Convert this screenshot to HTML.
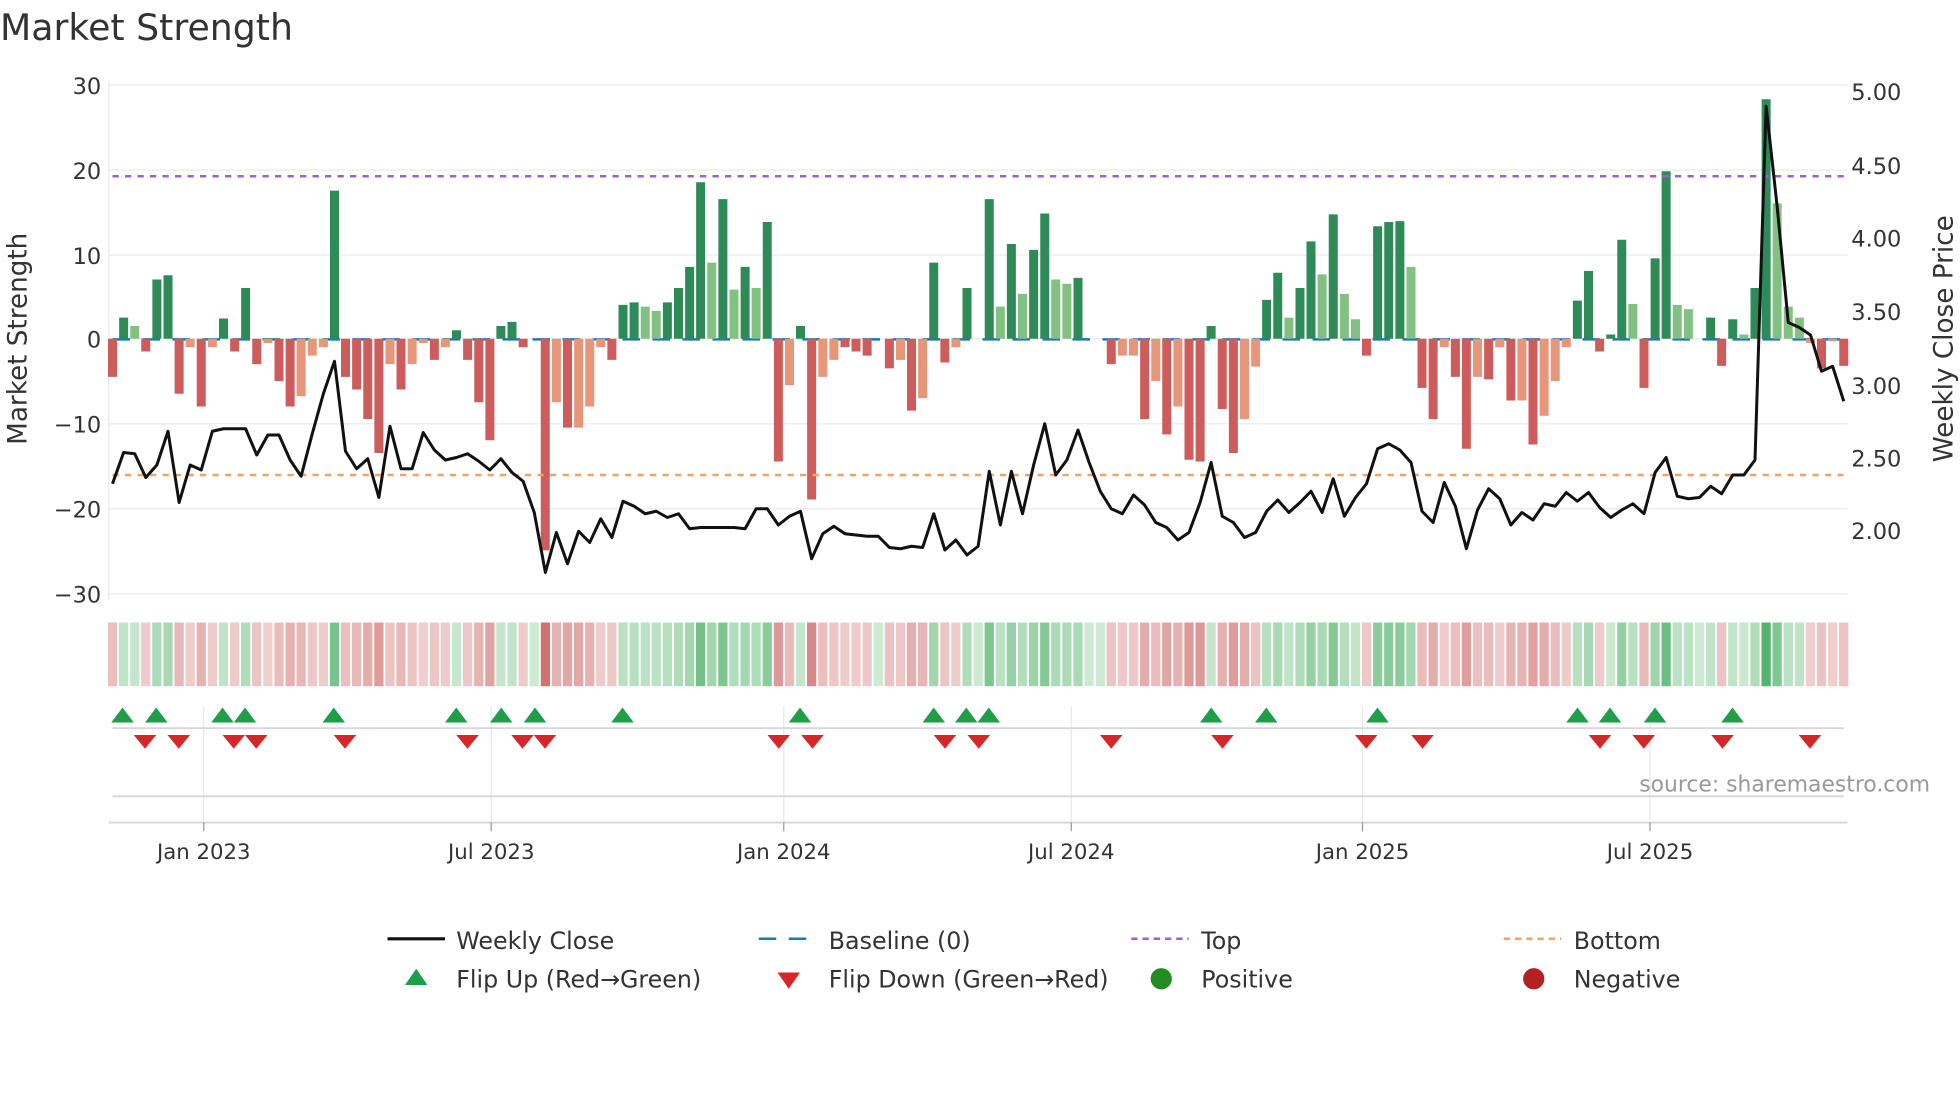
<!DOCTYPE html>
<html><head><meta charset="utf-8">
<style>
html,body{margin:0;padding:0;background:#fff;}
svg{display:block;font-family:"DejaVu Sans","Liberation Sans",sans-serif;}
</style></head>
<body>
<svg id="s" width="1960" height="1102" viewBox="0 0 1568 881.6" xmlns="http://www.w3.org/2000/svg">
<rect width="1568" height="882" fill="#fff"/>
<text x="0" y="32" font-size="29" fill="#333">Market Strength</text>
<g id="grid" stroke="#eceef3" stroke-width="1.2">
<line x1="87" y1="68" x2="1478" y2="68"/><line x1="87" y1="136" x2="1478" y2="136"/>
<line x1="87" y1="204" x2="1478" y2="204"/><line x1="87" y1="271" x2="1478" y2="271"/>
<line x1="87" y1="339" x2="1478" y2="339"/><line x1="87" y1="407" x2="1478" y2="407"/>
<line x1="87" y1="475" x2="1478" y2="475"/><line x1="87" y1="65" x2="87" y2="480"/>
</g>
<g font-size="18" fill="#333" text-anchor="end">
<text x="81" y="75">30</text><text x="81" y="143">20</text><text x="81" y="211">10</text>
<text x="81" y="278">0</text><text x="81" y="346">−10</text><text x="81" y="414">−20</text><text x="81" y="482">−30</text>
</g>
<g font-size="18" fill="#333">
<text x="1481" y="80">5.00</text><text x="1481" y="139">4.50</text><text x="1481" y="197">4.00</text>
<text x="1481" y="256">3.50</text><text x="1481" y="315">3.00</text><text x="1481" y="373">2.50</text><text x="1481" y="431">2.00</text>
</g>
<text transform="translate(21,271) rotate(-90)" font-size="21" fill="#333" text-anchor="middle">Market Strength</text>
<text transform="translate(1562,271) rotate(-90)" font-size="21" fill="#333" text-anchor="middle">Weekly Close Price</text>
<line x1="90" y1="271.5" x2="1477" y2="271.5" stroke="#1f77b4" stroke-width="2" stroke-dasharray="14,10"/>
<g id="bars"></g>
<line x1="90" y1="141" x2="1477" y2="141" stroke="#9b5fd8" stroke-width="2" stroke-dasharray="5,5"/>
<line x1="90" y1="380" x2="1477" y2="380" stroke="#f0a364" stroke-width="2" stroke-dasharray="5,5"/>
<polyline id="price" fill="none" stroke="#111" stroke-width="2.4" stroke-linejoin="round"/>
<g id="heat"></g>
<g stroke="#e6e8ee" stroke-width="1">
<line x1="163" y1="565" x2="163" y2="658"/><line x1="393" y1="565" x2="393" y2="658"/>
<line x1="627" y1="565" x2="627" y2="658"/><line x1="857" y1="565" x2="857" y2="658"/>
<line x1="1090" y1="565" x2="1090" y2="658"/><line x1="1320" y1="565" x2="1320" y2="658"/>
</g>
<line x1="90" y1="582.5" x2="1475" y2="582.5" stroke="#d5d7dc" stroke-width="1.5"/>
<line x1="90" y1="637" x2="1475" y2="637" stroke="#d5d7dc" stroke-width="1.5"/>
<line x1="87" y1="658" x2="1478" y2="658" stroke="#d5d7dc" stroke-width="1.5"/>
<g stroke="#999" stroke-width="1">
<line x1="163" y1="658" x2="163" y2="665"/><line x1="393" y1="658" x2="393" y2="665"/>
<line x1="627" y1="658" x2="627" y2="665"/><line x1="857" y1="658" x2="857" y2="665"/>
<line x1="1090" y1="658" x2="1090" y2="665"/><line x1="1320" y1="658" x2="1320" y2="665"/>
</g>
<g id="tri"></g>
<g font-size="17" fill="#333" text-anchor="middle">
<text x="163" y="687">Jan 2023</text><text x="393" y="687">Jul 2023</text><text x="627" y="687">Jan 2024</text>
<text x="857" y="687">Jul 2024</text><text x="1090" y="687">Jan 2025</text><text x="1320" y="687">Jul 2025</text>
</g>
<text x="1544" y="633" font-size="17.5" fill="#999" text-anchor="end">source: sharemaestro.com</text>
<g font-size="19" fill="#333">
<line x1="310" y1="751" x2="356" y2="751" stroke="#111" stroke-width="2.5"/>
<text x="365" y="759">Weekly Close</text>
<line x1="607" y1="751" x2="653" y2="751" stroke="#1f77b4" stroke-width="2" stroke-dasharray="14,10"/>
<text x="663" y="759">Baseline (0)</text>
<line x1="905" y1="751" x2="951" y2="751" stroke="#9b5fd8" stroke-width="2" stroke-dasharray="5,4"/>
<text x="961" y="759">Top</text>
<line x1="1203" y1="751" x2="1249" y2="751" stroke="#f0a364" stroke-width="2" stroke-dasharray="5,4"/>
<text x="1259" y="759">Bottom</text>
<polygon points="324,788 342,788 333,775" fill="#1f9e4a"/>
<text x="365" y="790">Flip Up (Red→Green)</text>
<polygon points="622,778 640,778 631,791" fill="#d62728"/>
<text x="663" y="790">Flip Down (Green→Red)</text>
<circle cx="929" cy="783" r="8.5" fill="#228b22"/>
<text x="961" y="790">Positive</text>
<circle cx="1227" cy="783" r="8.5" fill="#b22222"/>
<text x="1259" y="790">Negative</text>
</g>
</svg>
<script>
var B="-4.5R 2.5G 1.5g -1.5R 7G 7.5G -6.5R -1r -8R -1r 2.4G -1.5R 6G -3R -0.5r -5R -8R -6.8r -2r -1r 17.5G -4.5R -6R -9.5R -13.5R -3r -6R -3r -0.5r -2.5R -1r 1G -2.5R -7.5R -12R 1.5G 2G -1R 0g -25R -7.5r -10.5R -10.5r -8r -1r -2.5R 4G 4.3G 3.8g 3.3g 4.3G 6G 8.5G 18.5G 9g 16.5G 5.8g 8.5G 6g 13.8G -14.5R -5.5r 1.5G -19R -4.5r -2.5r -1R -1.5R -2R 0g -3.5R -2.5r -8.5R -7r 9G -2.8R -1r 6G 0g 16.5G 3.8g 11.2G 5.3g 10.5G 14.8G 7g 6.5g 7.2G 0g 0g -3R -2r -2r -9.5R -5r -11.3R -8r -14.3R -14.5R 1.5G -8.3R -13.5R -9.5r -3.3r 4.6G 7.8G 2.5g 6G 11.5G 7.6g 14.7G 5.3g 2.3g -2R 13.3G 13.8G 13.9G 8.5g -5.8R -9.5R -1r -4.5R -13R -4.5r -4.8R -1r -7.3R -7.3r -12.5R -9.1r -5r -1r 4.5G 8G -1.5R 0.5G 11.7G 4.1g -5.8R 9.5G 19.8G 4g 3.5g 0g 2.5G -3.2R 2.3G 0.5g 6G 28.3G 16g 3.8g 2.5g -0.5r -3.5R -0.3r -3.2R".split(" ");
var P="387 362 363 382 372 345 402 372 376 345 343 343 343 364 348 348 368 381 347 315 289 361 375 367 398 341 375 375 346 360 368 366 363 369 376 367 378 385 410 458 426 451 425 434 415 430 401 405 411 409 414 411 423 422 422 422 422 423 407 407 420 413 409 447 427 421 427 428 429 429 438 439 437 438 411 440 432 444 437 377 420 377 411 372 339 380 368 344 370 393 407 411 396 404 418 422 432 426 402 370 413 418 430 426 409 400 410 402 393 410 383 413 398 387 359 355 360 370 409 418 386 405 439 408 391 399 420 410 416 403 405 394 401 394 406 414 408 403 411 378 366 397 399 398 389 395 380 380 368 85 165 258 262 268 297 293 321".split(" ");
var col={G:"#2e8b57",g:"#82c182",R:"#cd5c5c",r:"#e8967a"};
var n=B.length, x0=90, dx=(1475-90)/(n-1), bw=7.2, h="", hm="", pts=[];
function mix(a,b,t){return "rgb("+a.map(function(v,i){return Math.round(v+(b[i]-v)*t)}).join(",")+")";}
for(var i=0;i<n;i++){
  var s=B[i], t=s.slice(-1), v=parseFloat(s), x=x0+i*dx;
  var y0=271, y1=271-v*6.77;
  if(v!==0) h+='<rect x="'+(x-bw/2).toFixed(1)+'" y="'+Math.min(y0,y1).toFixed(1)+'" width="'+bw+'" height="'+Math.abs(y1-y0).toFixed(1)+'" fill="'+col[t]+'"/>';
  var tt=Math.min(1,Math.abs(v)/25), c;
  if(v>0||(v===0&&t==="g")) c=mix([220,241,224],[60,168,88],0.1+tt*0.75); else c=mix([245,220,220],[200,95,94],0.1+tt*0.75);
  hm+='<rect x="'+(x-3.7).toFixed(1)+'" y="498" width="7.4" height="51" fill="'+c+'"/>';
  pts.push(x.toFixed(1)+","+P[i]);
}
document.getElementById("bars").innerHTML=h;
document.getElementById("heat").innerHTML=hm;
document.getElementById("price").setAttribute("points",pts.join(" "));
var up=[98,125,178,196,267,365,401,428,498,640,747,773,791,969,1013,1102,1262,1288,1324,1386];
var dn=[116,143,187,205,276,374,418,436,623,650,756,783,889,978,1093,1138,1280,1315,1378,1448];
var tr="";
up.forEach(function(x){tr+='<polygon points="'+(x-9)+',578 '+(x+9)+',578 '+x+',566" fill="#1f9e4a"/>';});
dn.forEach(function(x){tr+='<polygon points="'+(x-9)+',588 '+(x+9)+',588 '+x+',599" fill="#d62728"/>';});
document.getElementById("tri").innerHTML=tr;
</script>
</body></html>
